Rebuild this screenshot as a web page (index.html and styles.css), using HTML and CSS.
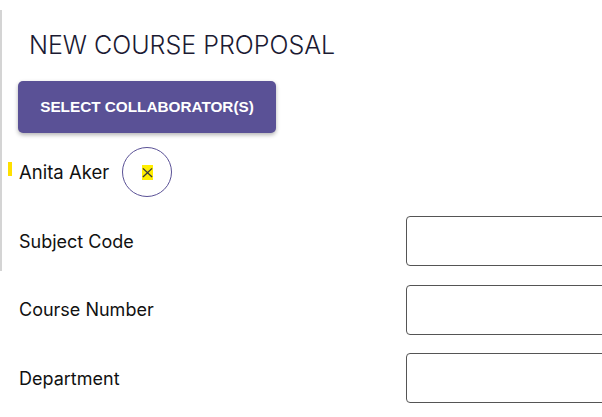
FILE: index.html
```html
<!DOCTYPE html>
<html>
<head>
<meta charset="utf-8">
<link rel="stylesheet" href="styles.css">
</head>
<body>
<div class="page">
  <div class="rail"></div>
  <main class="content">
    <h1 class="title">NEW COURSE PROPOSAL</h1>
    <button class="select-btn">SELECT COLLABORATOR(S)</button>
    <div class="collab">
      <span class="focus-mark"></span>
      <span class="collab-name">Anita Aker</span>
      <button class="remove-btn" aria-label="Remove">
        <span class="x-focus">
          <svg width="13" height="13" viewBox="0 0 12 12"><path d="M1 1.5 L11 11 M11 1.5 L1 11" stroke="#3a3a3a" stroke-width="1.5" fill="none"/></svg>
        </span>
      </button>
    </div>
    <div class="fields">
      <div class="field"><label class="label">Subject Code</label><div class="input"></div></div>
      <div class="field"><label class="label">Course Number</label><div class="input"></div></div>
      <div class="field"><label class="label">Department</label><div class="input"></div></div>
    </div>
  </main>
</div>
</body>
</html>
```
FILE: styles.css
```css
html, body { margin: 0; padding: 0; background: #fff; overflow: hidden; }
body { font-family: Inter, "Liberation Sans", sans-serif; color: #111; }
.page { display: flex; width: 602px; height: 417px; overflow: hidden; }
.rail { width: 2px; margin-top: 10px; height: 261px; background: #d4d4d4; flex: none; }
.content { flex: 1; min-width: 0; padding-left: 16px; position: relative; }
.title { margin: 30px 0 0 11px; font-weight: 300; font-size: 25px; line-height: 30px; color: #1b1a33; }
.select-btn { margin-top: 21px; width: 258px; height: 52px; border: none; border-radius: 5px; background: #5a5196; color: #fff; font-family: "Liberation Sans", Arial, sans-serif; font-weight: 700; font-size: 15.3px; letter-spacing: 0; box-shadow: 0 2px 4px rgba(0,0,0,0.3); display: block; padding: 0; }
.collab { display: flex; align-items: center; margin-top: 14px; height: 50px; position: relative; }
.focus-mark { position: absolute; left: -10px; top: 15px; width: 4px; height: 14px; background: #ffe000; }
.collab-name { font-size: 18.5px; margin-left: 1px; }
.remove-btn { margin-left: 13px; width: 50px; height: 50px; border-radius: 50%; border: 1px solid #5a5196; background: #fff; display: flex; align-items: center; justify-content: center; padding: 0; }
.x-focus { background: #ffee00; display: flex; align-items: center; justify-content: center; width: 11px; height: 15px; }
.fields { overflow: hidden; margin-top: 19px; display: flex; flex-direction: column; gap: 18.5px; }
.field { display: grid; grid-template-columns: 388px 240px; align-items: center; height: 50px; }
.label { font-size: 18px; margin-left: 1px; }
.input { height: 48px; border: 1px solid #555; border-radius: 4px; }
```
